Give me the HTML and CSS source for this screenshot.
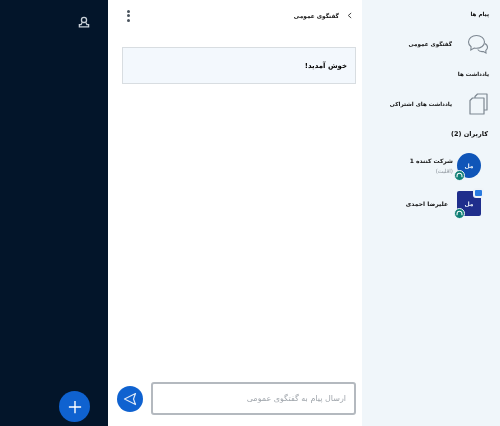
FILE: index.html
```html
<!DOCTYPE html>
<html lang="fa">
<head>
    <meta charset="UTF-8">
    <meta name="viewport" content="width=device-width, initial-scale=1.0">
    <title>گفتگوی عمومی</title>
    <link rel="stylesheet" href="styles.css">
</head>
<body>
    <div class="app">
        <div class="rail">
            <svg class="rail-user" width="12" height="12" viewBox="0 0 14 14" fill="none" stroke="#c9d0d8" stroke-width="1.5">
                <circle cx="7" cy="4.6" r="3"/>
                <path d="M4.8 7.6 3.6 10H1.6v2.6h10.8V10h-2L9.2 7.6"/>
            </svg>
            <button class="fab">
                <svg width="14" height="14" viewBox="0 0 16 16" stroke="#fff" stroke-width="1.6">
                    <path d="M8 1v14M1 8h14"/>
                </svg>
            </button>
        </div>

        <div class="chat">
            <div class="chat-head">
                <div class="dots"><i></i><i></i><i></i></div>
                <div class="chat-title">
                    <span>گفتگوی عمومی</span>
                    <svg width="5" height="7" viewBox="0 0 6 8" fill="none" stroke="#444" stroke-width="1.2">
                        <path d="M5 1 1.5 4 5 7"/>
                    </svg>
                </div>
            </div>
            <div class="welcome">خوش آمدید!</div>
            <div class="composer">
                <button class="send">
                    <svg width="14" height="14" viewBox="0 0 14 14" fill="none" stroke="#dbe8f8" stroke-width="1.2" stroke-linejoin="round">
                        <path d="M12.5 1.5 1.5 7l11 5.5L10.5 7z"/>
                    </svg>
                </button>
                <div class="msg-input">ارسال پیام به گفتگوی عمومی</div>
            </div>
        </div>

        <div class="side">
            <h4 class="side-title">پیام ها</h4>
            <div class="side-row">
                <svg width="22" height="22" viewBox="0 0 22 22" fill="none" stroke="#7d8791" stroke-width="1.1">
                    <path d="M9.5 2.5C5 2.5 1.5 5.3 1.5 9c0 2 1 3.600 2.600 4.800L3.800 17l3.400-2c.7.2 1.500.3 2.300.3 4.500 0 8-2.800 8-6.300s-3.500-6.500-8-6.500z"/>
                    <path d="M17.800 10.500c1.700.8 2.700 2.200 2.700 3.800 0 1.300-.6 2.400-1.700 3.200l.2 2.500-2.600-1.500c-2.300.4-4.500-.4-5.700-2"/>
                </svg>
                <span>گفتگوی عمومی</span>
            </div>
            <h4 class="side-title">یادداشت ها</h4>
            <div class="side-row">
                <svg width="22" height="22" viewBox="0 0 22 22" fill="none" stroke="#7d8791" stroke-width="1.2" stroke-linejoin="round">
                    <path d="M8 5V3.500L10.500 1H20v16h-3"/>
                    <path d="M3 7.500 5.500 5H17v16H3z"/>
                </svg>
                <span>یادداشت های اشتراکی</span>
            </div>
            <h4 class="side-title side-title-wide">کاربران (2)</h4>
            <div class="user">
                <div class="avatar round">
                    مل
                    <span class="status">
                        <svg width="7" height="7" viewBox="0 0 8 8" fill="none" stroke="#fff" stroke-width="1.2">
                            <path d="M1.2 6V4.200a2.800 2.800 0 0 1 5.600 0V6"/>
                        </svg>
                    </span>
                </div>
                <div class="user-info">
                    <span class="user-name">شرکت کننده 1</span>
                    <span class="user-sub">(اقلیت)</span>
                </div>
            </div>
            <div class="user user-second">
                <div class="avatar square">
                    مل
                    <span class="status">
                        <svg width="7" height="7" viewBox="0 0 8 8" fill="none" stroke="#fff" stroke-width="1.2">
                            <path d="M1.2 6V4.200a2.800 2.800 0 0 1 5.600 0V6"/>
                        </svg>
                    </span>
                    <span class="pres"></span>
                </div>
                <div class="user-info">
                    <span class="user-name">علیرضا احمدی</span>
                </div>
            </div>
        </div>
    </div>
</body>
</html>
```

FILE: styles.css
```css
* {
    box-sizing: border-box;
    margin: 0;
    padding: 0;
    font-family: "DejaVu Sans", "Noto Sans", sans-serif;
}

body {
    width: 500px;
    height: 426px;
    overflow: hidden;
    background-color: #fff;
}

button {
    border: none;
    cursor: pointer;
}

.app {
    display: grid;
    grid-template-columns: 108px 254px 138px;
    height: 100%;
    filter: blur(0.55px);
}

/* dark column */
.rail {
    display: flex;
    flex-direction: column;
    justify-content: space-between;
    padding: 16px 0 4px;
    background-color: #03152a;
}

.rail-user {
    margin-left: 78px;
}

.fab {
    display: flex;
    align-items: center;
    justify-content: center;
    width: 31px;
    height: 31px;
    margin-left: 59px;
    border-radius: 50%;
    background-color: #0f62d0;
}

/* chat */
.chat {
    display: flex;
    flex-direction: column;
    padding: 0 6px 11px 14px;
    background-color: #fff;
}

.chat-head {
    display: flex;
    align-items: center;
    justify-content: space-between;
    height: 31px;
    padding: 0 4px 0 5px;
}

.chat-title {
    display: flex;
    align-items: center;
    gap: 8px;
    font-size: 5.8px;
    font-weight: bold;
    color: #111;
}

.dots {
    display: flex;
    flex-direction: column;
    gap: 1.5px;
}

.dots i {
    display: block;
    width: 3px;
    height: 3px;
    border-radius: 50%;
    background-color: #4a545e;
}

.welcome {
    display: flex;
    align-items: center;
    direction: rtl;
    height: 37px;
    margin-top: 16px;
    padding: 0 8px;
    border: 1px solid #d8dde1;
    background-color: #f3f8fd;
    font-size: 7px;
    font-weight: bold;
    color: #000;
}

.composer {
    display: flex;
    align-items: center;
    gap: 8px;
    margin-top: auto;
    margin-left: -5px;
}

.send {
    display: flex;
    align-items: center;
    justify-content: center;
    width: 26px;
    height: 26px;
    border-radius: 50%;
    background-color: #0f62d0;
}

.msg-input {
    flex: 1;
    display: flex;
    align-items: center;
    direction: rtl;
    height: 33px;
    padding: 0 8px;
    border: 2px solid #b4b9bf;
    border-radius: 3px;
    font-size: 8px;
    color: #a0a6ac;
}

/* right column */
.side {
    display: flex;
    flex-direction: column;
    direction: rtl;
    padding: 9px 11px 0 0;
    background-color: #f0f6fa;
}

.side-title {
    height: 10px;
    line-height: 10px;
    font-size: 5.6px;
    font-weight: bold;
    color: #111;
}

.side-title-wide {
    font-size: 6.5px;
    padding-right: 1px;
}

.side-row {
    display: flex;
    align-items: center;
    gap: 15px;
    height: 50px;
    font-size: 5.6px;
    font-weight: bold;
    color: #111;
}

.side-row svg {
    flex-shrink: 0;
}

.user {
    display: flex;
    align-items: center;
    gap: 4px;
    height: 25px;
    margin-top: 14px;
    padding-right: 8px;
}

.user-second {
    margin-top: 13px;
    gap: 9px;
}

.avatar {
    position: relative;
    display: flex;
    align-items: center;
    justify-content: center;
    flex-shrink: 0;
    width: 24px;
    height: 25px;
    font-size: 6px;
    font-weight: bold;
    color: #e4ecf6;
}

.round {
    border-radius: 50%;
    background-color: #0f55b8;
}

.square {
    border-radius: 2px;
    background-color: #1f2e8c;
}

.status {
    position: absolute;
    bottom: -3px;
    right: 16px;
    display: flex;
    align-items: center;
    justify-content: center;
    width: 11px;
    height: 11px;
    border: 1px solid #f0f6fa;
    border-radius: 50%;
    background-color: #0e7f75;
}

.pres {
    position: absolute;
    top: -3px;
    right: -3px;
    width: 11px;
    height: 10px;
    border: 2px solid #eef3f8;
    border-radius: 3px;
    background-color: #2a7be0;
}

.user-info {
    display: flex;
    flex-direction: column;
    gap: 4px;
}

.user-name {
    font-size: 6px;
    font-weight: bold;
    color: #111;
    white-space: nowrap;
}

.user-sub {
    font-size: 5.500px;
    color: #8a9199;
}
```
